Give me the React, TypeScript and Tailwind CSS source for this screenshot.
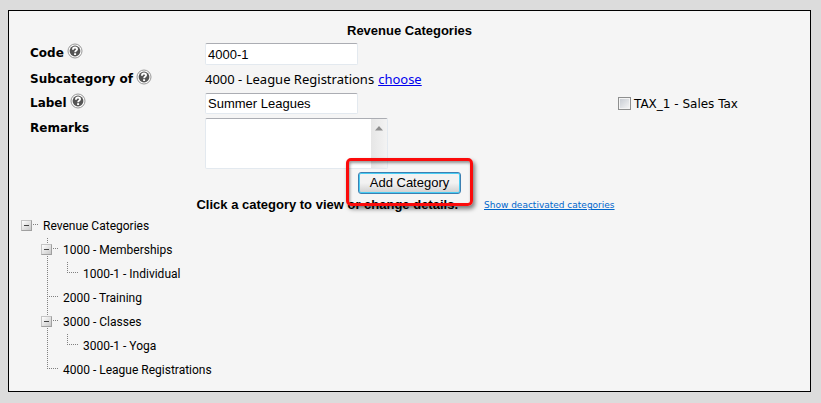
import { useState } from "react";
import type { ReactNode } from "react";

const uiFont = "font-['Noto_Sans',sans-serif]";
const arial = "font-['Liberation_Sans',Arial,sans-serif]";
const fieldBorder = "rounded-[2px] border border-[#e3e9ef] border-t-[#abadb3] bg-white";

function HelpIcon() {
  return (
    <svg width="16" height="16" viewBox="0 0 16 16" aria-hidden="true" className="mb-1 shrink-0">
      <circle cx="8" cy="8" r="7" fill="#fbfbfb" stroke="#999" strokeWidth="1" />
      <circle cx="8" cy="8" r="5.4" fill="#555" />
      <path d="M5.9 6.8C5.9 5.2 6.8 4.5 8 4.5S10.1 5.2 10.1 6.3C10.1 7.6 8.1 7.5 8.1 9.3" fill="none" stroke="#fff" strokeWidth="1.8" />
      <rect x="7.1" y="10.2" width="2" height="1.8" fill="#fff" />
    </svg>
  );
}

function RowLabel({ children, help, htmlFor }: { children: ReactNode; help?: boolean; htmlFor?: string }) {
  const Tag = htmlFor ? "label" : "span";
  return (
    <Tag htmlFor={htmlFor} className="flex h-5 items-center gap-[3px] font-['DejaVu_Sans',Verdana,sans-serif] text-[12px] leading-5 font-bold">
      {children}
      {help && <HelpIcon />}
    </Tag>
  );
}

type Node = { name: string; children?: Node[] };

const tree: Node = {
  name: "Revenue Categories",
  children: [
    { name: "1000 - Memberships", children: [{ name: "1000-1 - Individual" }] },
    { name: "2000 - Training" },
    { name: "3000 - Classes", children: [{ name: "3000-1 - Yoga" }] },
    { name: "4000 - League Registrations" },
  ],
};

function Guide({ kind }: { kind: "blank" | "line" | "tee" | "elbow" | "root" }) {
  return (
    <svg width="20" height="24" viewBox="0 0 20 24" fill="none" stroke="#808080" strokeDasharray="1 1" className="shrink-0" aria-hidden="true">
      {(kind === "line" || kind === "tee") && <path d="M6.5 0V24" />}
      {kind === "elbow" && <path d="M6.5 0V11" />}
      {kind !== "blank" && kind !== "line" && <path d="M6 10.5H17" />}
    </svg>
  );
}

function TreeItem({ node, trail, last, root }: { node: Node; trail: ("blank" | "line")[]; last: boolean; root?: boolean }) {
  const [open, setOpen] = useState(true);
  return (
    <li>
      <div className="flex h-6 items-center">
        {trail.map((kind, i) => (
          <Guide key={i} kind={kind} />
        ))}
        <span className="relative flex">
          <Guide kind={root ? "root" : last ? "elbow" : "tee"} />
          {node.children && (
            <button
              type="button"
              aria-label={`Toggle ${node.name}`}
              onClick={() => setOpen(!open)}
              className="absolute top-1.5 left-0 flex size-[11px] items-center justify-center border border-[#a0a0a0] border-t-[#c4c4c4] border-l-[#c4c4c4] bg-linear-to-br from-white to-[#c8c8c8]"
            >
              <svg width="5" height="5" viewBox="0 0 5 5" stroke="#444" aria-hidden="true">
                <path d={open ? "M0 2.5H5" : "M0 2.5H5M2.5 0V5"} />
              </svg>
            </button>
          )}
        </span>
        <span className="pl-0.5 whitespace-nowrap">{node.name}</span>
      </div>
      {open && node.children && (
        <ul>
          {node.children.map((child, i) => (
            <TreeItem
              key={child.name}
              node={child}
              trail={[...trail, root || last ? "blank" : "line"]}
              last={i === node.children!.length - 1}
            />
          ))}
        </ul>
      )}
    </li>
  );
}

export default function App() {
  return (
    <div className={`min-h-screen bg-[#dcdcdc] pt-2.5 pr-2.5 pb-2.5 pl-2 text-black ${uiFont}`}>
      <main className="border border-black bg-[#f5f5f5] pt-2.5 pb-[9px]">
        <h1 className={`text-center text-[13px] leading-5 font-bold ${arial}`}>Revenue Categories</h1>

        <form onSubmit={(e) => e.preventDefault()}>
          <div className="mt-0.5 grid grid-cols-[175px_1fr_192px] gap-y-1 pl-[21px] text-[13px]">
            <RowLabel help htmlFor="code">Code</RowLabel>
            <input id="code" defaultValue="4000-1" className={`col-span-2 h-[22px] w-[153px] px-0.5 text-[13px] ${fieldBorder} ${arial}`} />

            <RowLabel help>Subcategory of</RowLabel>
            <div className="col-span-2 flex h-5 items-center gap-1 leading-5">
              <span>4000 - League Registrations</span>
              <a href="#choose" className="text-[#0000ee] underline">choose</a>
            </div>

            <RowLabel help htmlFor="label">Label</RowLabel>
            <input id="label" defaultValue="Summer Leagues" className={`h-[21px] w-[153px] px-0.5 text-[13px] ${fieldBorder} ${arial}`} />
            <label className="flex items-center gap-[3px] font-['DejaVu_Sans',Verdana,sans-serif] text-[12px] leading-5">
              <input
                type="checkbox"
                className="size-[13px] appearance-none border border-[#8e8f8f] bg-linear-to-br from-[#c4c9d0] to-[#f8f8f8] shadow-[inset_0_0_0_1px_#f4f4f4] checked:bg-[#4b6c9c] checked:bg-none"
              />
              TAX_1 - Sales Tax
            </label>

            <RowLabel htmlFor="remarks">Remarks</RowLabel>
            <div className={`col-span-2 flex h-[51px] w-[183px] ${fieldBorder}`}>
              <textarea id="remarks" className="min-w-0 flex-1 resize-none overflow-hidden px-0.5 outline-none" />
              <span className="flex w-4 justify-center bg-linear-to-r from-[#e6e6e6] to-[#f3f3f3] pt-[7px]" aria-hidden="true">
                <svg width="8" height="5" viewBox="0 0 8 5">
                  <path d="M0 4.5L4 0L8 4.5Z" fill="#8e8e8e" />
                </svg>
              </span>
            </div>
          </div>

          <div className="mt-[3px] flex justify-center">
            <div className="relative">
              <button
                type="submit"
                className={`block h-[22px] w-[103px] rounded-[3px] border border-[#3c7fb1] bg-linear-to-b from-[#f2f2f2] from-50% to-[#cfcfcf] to-100% text-[13px] leading-5 whitespace-nowrap shadow-[inset_0_0_0_1px_#48cdf4] ${arial}`}
              >
                Add Category
              </button>
              <span className="pointer-events-none absolute -inset-x-3 -top-3.5 -bottom-3 rounded-[5px] border-3 border-[#fb0b0b] shadow-[2px_3px_4px_rgba(0,0,0,0.5),inset_1px_2px_3px_rgba(0,0,0,0.4)]" />
            </div>
          </div>
        </form>

        <div className="flex h-5 items-center justify-center gap-[26px] pt-0.5 pr-2">
          <h2 className={`text-[13px] font-bold ${arial}`}>Click a category to view or change details.</h2>
          <a href="#deactivated" className="pt-0.5 font-['DejaVu_Sans',Verdana,sans-serif] text-[9px] text-[#0066cc] underline">Show deactivated categories</a>
        </div>

        <ul className="pl-3 font-['Roboto',sans-serif] text-[12px] leading-6">
          <TreeItem node={tree} trail={[]} last root />
        </ul>
      </main>
    </div>
  );
}
